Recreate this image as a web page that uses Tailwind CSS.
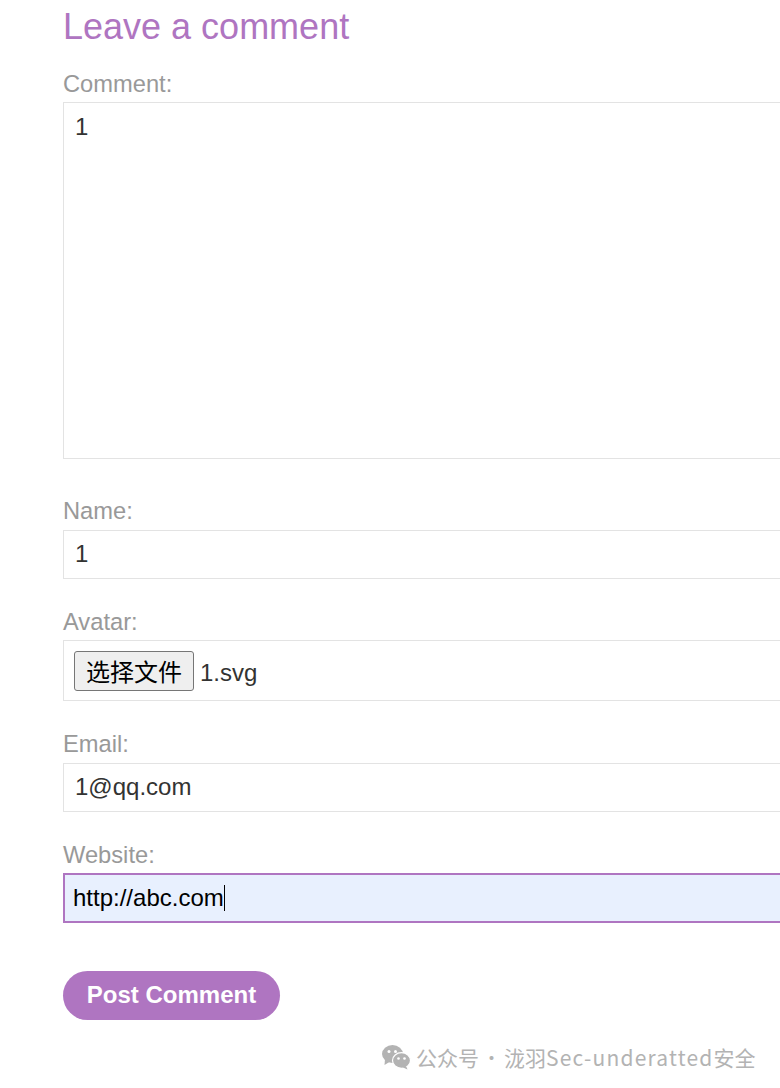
<!DOCTYPE html>
<html lang="en">
<head>
    <meta charset="UTF-8">
    <title>Leave a comment</title>
    <script src="https://cdn.jsdelivr.net/npm/@tailwindcss/browser@4"></script>
</head>
<body class="bg-white h-[1088px] w-[780px] overflow-hidden relative font-['Liberation_Sans','Noto_Sans_CJK_SC',sans-serif]">
    <section class="pl-[63px] w-[780px] overflow-hidden">
        <h2 class="text-[36px] leading-[40px] h-[40px] mt-[7px] text-[#af75c1] mb-[24px]">Leave a comment</h2>
        <form class="w-[800px]">
            <label class="block text-[23.7px] leading-[27px] h-[27px] text-[#999999] mb-[4px]">Comment:</label>
            <div class="h-[357px] border border-[#e3e3e3] px-[11px] pt-[8px] text-[24px] leading-[32px] text-[#333332]">1</div>

            <label class="block text-[23.7px] leading-[27px] h-[27px] text-[#999999] mt-[39px] mb-[5px]">Name:</label>
            <div class="h-[49px] border border-[#e3e3e3] px-[11px] text-[24px] leading-[45px] text-[#333332]">1</div>

            <label class="block text-[23.7px] leading-[27px] h-[27px] text-[#999999] mt-[30px] mb-[4px]">Avatar:</label>
            <div class="h-[61px] border border-[#e3e3e3] pl-[10px] flex items-center text-[24px] text-[#333332]">
                <span class="w-[120px] h-[40px] pt-[5px] border border-[#767676] rounded-[3px] bg-[#efefef] text-black flex items-center justify-center leading-none">选择文件</span>
                <span class="ml-[6px] pt-[5px]">1.svg</span>
            </div>

            <label class="block text-[23.7px] leading-[27px] h-[27px] text-[#999999] mt-[30px] mb-[5px]">Email:</label>
            <div class="h-[49px] border border-[#e3e3e3] px-[11px] text-[24px] leading-[45px] text-[#333332]">1@qq.com</div>

            <label class="block text-[23.7px] leading-[27px] h-[27px] text-[#999999] mt-[30px] mb-[4px]">Website:</label>
            <div class="h-[50px] border-2 border-[#af75c1] bg-[#e8f0fe] pl-[8px] text-[24px] leading-[46px] text-black flex items-center">
                <span>http://abc.com</span><span class="w-px h-[26px] bg-black"></span>
            </div>

            <button type="button" class="block mt-[48px] w-[217px] h-[49px] pb-[1px] rounded-full bg-[#af75c1] text-white font-bold text-[24px] leading-none">Post Comment</button>
        </form>
    </section>

    <!-- watermark -->
    <div class="absolute left-[381px] top-[1042px] flex items-center text-[21px] leading-[30px] text-[#b3b3b3] font-['Noto_Sans_CJK_SC','Noto_Sans',sans-serif] whitespace-nowrap">
        <svg class="w-[30px] h-[26px] mr-[5px]" viewBox="0 0 30 26" fill="#b3b3b3">
            <ellipse cx="11.5" cy="10" rx="10.5" ry="9"/>
            <path d="M4 15 L3.5 21 L10 17 Z"/>
            <ellipse cx="20.5" cy="16.5" rx="9" ry="7.8" stroke="#fff" stroke-width="1.2"/>
            <path d="M25 22 L26.5 25.5 L21 23 Z"/>
            <circle cx="8" cy="7.5" r="1.5" fill="#fff"/>
            <circle cx="14.5" cy="7.5" r="1.5" fill="#fff"/>
            <circle cx="17.5" cy="14.5" r="1.3" fill="#fff"/>
            <circle cx="23.5" cy="14.5" r="1.3" fill="#fff"/>
        </svg>
        <span>公众号</span>
        <span class="w-[25px] text-center font-light">·</span>
        <span>泷羽</span>
        <span class="tracking-[1.2px]">Sec-underatted</span>
        <span>安全</span>
    </div>
</body>
</html>
